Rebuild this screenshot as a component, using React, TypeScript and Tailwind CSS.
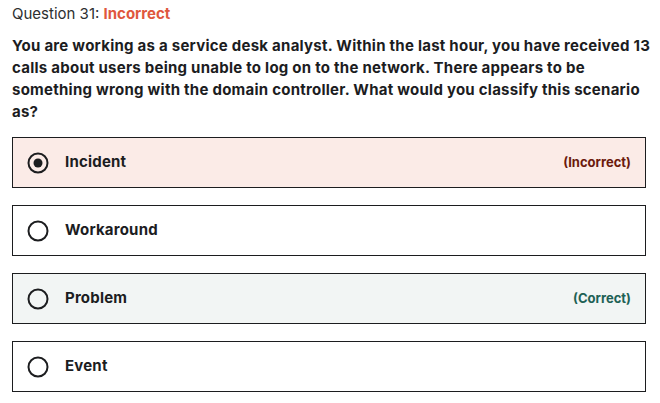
import React from "react";

type Option = {
  id: number;
  label: string;
  status?: "incorrect" | "correct";
  selected?: boolean;
};

const options: Option[] = [
  { id: 1, label: "Incident", status: "incorrect", selected: true },
  { id: 2, label: "Workaround" },
  { id: 3, label: "Problem", status: "correct" },
  { id: 4, label: "Event" },
];

function Radio({ selected }: { selected?: boolean }) {
  return (
    <svg width="22" height="22" viewBox="0 0 22 22" className="shrink-0">
      <circle cx="11" cy="11" r="9.5" fill="none" stroke="#1c1d1f" strokeWidth="2" />
      {selected && <circle cx="11" cy="11" r="4.5" fill="#1c1d1f" />}
    </svg>
  );
}

export default function App() {
  return (
    <div className="w-[660px] h-[403px] bg-white px-[12px] pt-[3px] font-['Inter',sans-serif] text-[#1c1d1f]">
      <p className="text-[15px] leading-[22px] text-[#2d2f31]">
        Question 31: <span className="font-bold text-[#e0573d]">Incorrect</span>
      </p>
      <p className="mt-[10px] text-[15px] leading-[22px] font-bold tracking-[0.25px] whitespace-nowrap">
        You are working as a service desk analyst. Within the last hour, you have received 13
        <br />
        calls about users being unable to log on to the network. There appears to be
        <br />
        something wrong with the domain controller. What would you classify this scenario
        <br />
        as?
      </p>
      <div className="mt-[14px] flex flex-col gap-[17px] w-[634px]">
        {options.map((o) => (
          <div
            key={o.id}
            className={
              "h-[51px] border border-[#1c1d1f] flex items-center pl-[14px] pr-[14px] " +
              (o.status === "incorrect" ? "bg-[#fbebe7]" : o.status === "correct" ? "bg-[#f2f5f4]" : "bg-white")
            }
          >
            <Radio selected={o.selected} />
            <span className="ml-[16px] text-[15px] font-bold tracking-[0.2px]">{o.label}</span>
            {o.status === "incorrect" && (
              <span className="ml-auto text-[13px] font-bold text-[#6b1a0d]">(Incorrect)</span>
            )}
            {o.status === "correct" && (
              <span className="ml-auto text-[13px] font-bold text-[#1e6155]">(Correct)</span>
            )}
          </div>
        ))}
      </div>
    </div>
  );
}
